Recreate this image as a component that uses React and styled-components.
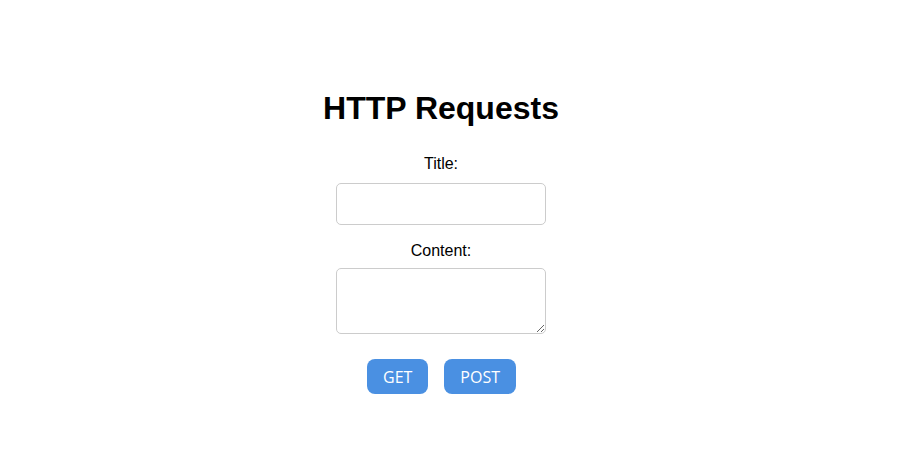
import React from "react";
import styled, { createGlobalStyle } from "styled-components";

const Global = createGlobalStyle`
  html, body { margin: 0; padding: 0; background: #fff; }
  body { font-family: "Liberation Sans", Arial, sans-serif; color: #000; }
`;

const Page = styled.div`
  display: flex;
  flex-direction: column;
  align-items: center;
  width: 906px;
  padding: 90px 24px 0 0;
  box-sizing: border-box;
`;

const Title = styled.h1`
  margin: 0 0 28px;
  font-size: 32px;
  font-weight: bold;
  line-height: 37px;
`;

const Form = styled.form`
  display: flex;
  flex-direction: column;
  align-items: center;
`;

const Label = styled.label`
  font-size: 16px;
  line-height: 18px;
  margin-top: ${(p) => (p.$first ? "0" : "17px")};
  margin-bottom: ${(p) => (p.$first ? "10px" : "8px")};
`;

const fieldCss = `
  width: 210px;
  box-sizing: border-box;
  border: 1px solid #ccc;
  border-radius: 5px;
  background: #fff;
  font-family: "Liberation Sans", Arial, sans-serif;
  font-size: 16px;
  padding: 8px;
  margin: 0;
  outline: none;
`;

const Input = styled.input`
  ${fieldCss}
  height: 42px;
`;

const TextArea = styled.textarea`
  ${fieldCss}
  height: 66px;
  display: block;
`;

const Buttons = styled.div`
  display: flex;
  gap: 16px;
  margin-top: 25px;
  padding-left: 1px;
`;

const Button = styled.button`
  height: 35px;
  padding: 0 16px;
  border: none;
  border-radius: 8px;
  background: #4a90e2;
  color: #fff;
  font-family: "Open Sans", sans-serif;
  font-size: 16px;
  cursor: pointer;
`;

export default function App() {
  return (
    <>
      <Global />
      <Page>
        <Title>HTTP Requests</Title>
        <Form onSubmit={(e) => e.preventDefault()}>
          <Label $first htmlFor="title">Title:</Label>
          <Input id="title" type="text" />
          <Label htmlFor="content">Content:</Label>
          <TextArea id="content" />
          <Buttons>
            <Button type="button">GET</Button>
            <Button type="button">POST</Button>
          </Buttons>
        </Form>
      </Page>
    </>
  );
}
